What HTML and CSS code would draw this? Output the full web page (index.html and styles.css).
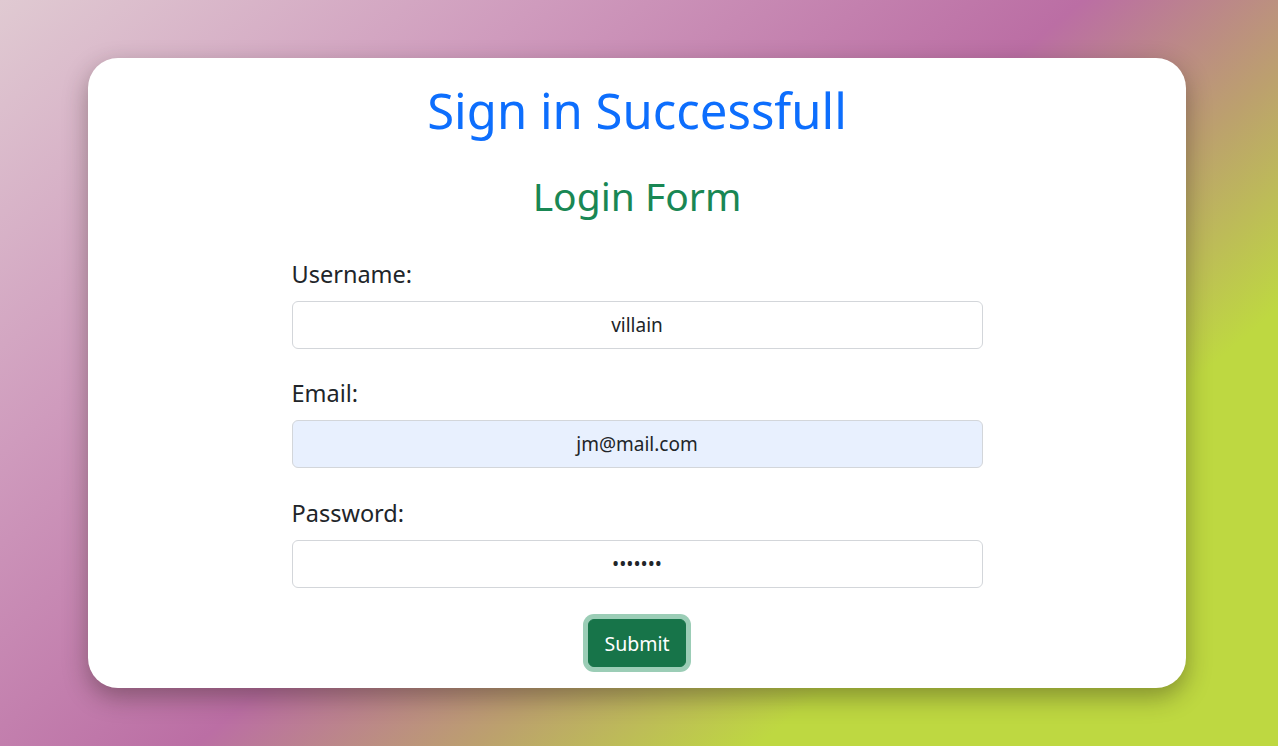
FILE: index.html
```html
<!DOCTYPE html>
<html lang="en">
<head>
<meta charset="utf-8">
<title>Login</title>
<link rel="stylesheet" href="styles.css">
</head>
<body>
  <main class="card">
    <h1 class="title">Sign in Successfull</h1>
    <h2 class="subtitle">Login Form</h2>
    <form class="form">
      <div class="group">
        <label class="label" for="u">Username:</label>
        <input class="field" id="u" type="text" value="villain">
      </div>
      <div class="group">
        <label class="label" for="e">Email:</label>
        <input class="field field-autofill" id="e" type="email" value="jm@mail.com">
      </div>
      <div class="group">
        <label class="label" for="p">Password:</label>
        <input class="field" id="p" type="password" value="1234567">
      </div>
      <div class="actions">
        <button class="btn" type="button">Submit</button>
      </div>
    </form>
  </main>
</body>
</html>
```

FILE: styles.css
```css
html, body {
  margin: 0;
  padding: 0;
}
body {
  min-height: 746px;
  background: linear-gradient(140deg, #e0cad2 0%, #cf9bbd 25%, #bb6ea4 50%, #bca06e 63%, #bed841 76%, #bed841 100%);
  font-family: "Noto Sans", "Open Sans", sans-serif;
  color: #212529;
  overflow: hidden;
}
.card {
  box-sizing: border-box;
  width: 1098px;
  height: 630px;
  margin: 58px 92px 0 88px;
  background: #fff;
  border-radius: 30px;
  box-shadow: 0 9px 24px rgba(40, 30, 20, 0.38);
  padding-top: 23px;
}
.title {
  margin: 0;
  text-align: center;
  font-size: 49px;
  font-weight: 400;
  line-height: 1.2;
  color: #0d6efd;
}
.subtitle {
  margin: 33px 0 0;
  text-align: center;
  font-size: 39px;
  font-weight: 400;
  line-height: 1.2;
  color: #198754;
}
.form {
  width: 691px;
  margin: 36px auto 0;
  display: flex;
  flex-direction: column;
  gap: 26.5px;
}
.group {
  display: flex;
  flex-direction: column;
  gap: 9px;
}
.label {
  font-size: 23.5px;
  line-height: 36px;
  color: #212529;
}
.field {
  box-sizing: border-box;
  width: 100%;
  height: 48px;
  padding: 8px 16px;
  font-family: inherit;
  font-size: 19px;
  color: #212529;
  text-align: center;
  background: #fff;
  border: 1px solid #d3d6da;
  border-radius: 6px;
  outline: none;
}
.field-autofill {
  background: #e8f0fe;
}
.actions {
  display: flex;
  justify-content: center;
  margin-top: 5px;
}
.btn {
  box-sizing: border-box;
  height: 48px;
  padding: 0 15px;
  font-family: inherit;
  font-size: 19.5px;
  color: #fff;
  background: #177449;
  border: 1px solid #177449;
  border-radius: 6px;
  box-shadow: 0 0 0 5px #9bcdb6;
}
```
